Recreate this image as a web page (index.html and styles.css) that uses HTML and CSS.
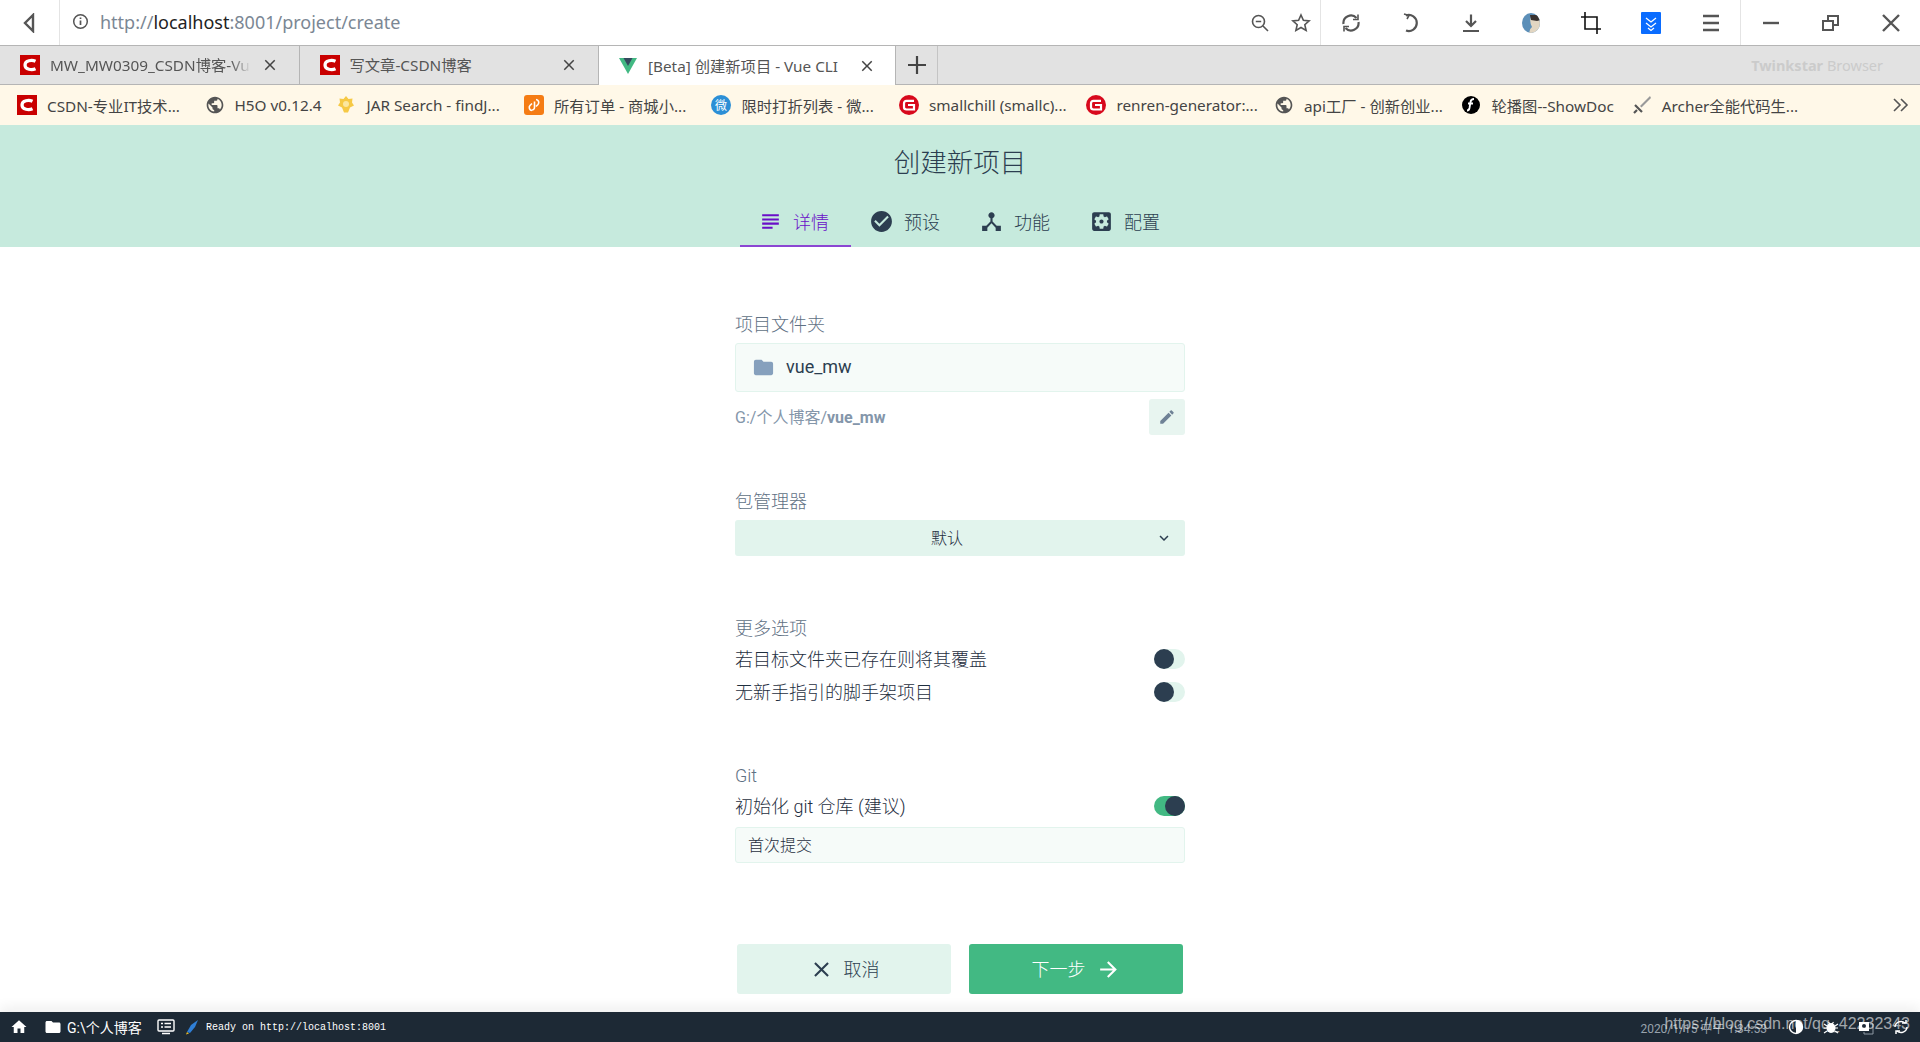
FILE: index.html
```html
<!DOCTYPE html>
<html lang="zh-CN">
<head>
  <meta charset="UTF-8">
  <title>[Beta] 创建新项目 - Vue CLI</title>
  <link rel="stylesheet" href="styles.css">
</head>
<body>
  <svg class="sprite" xmlns="http://www.w3.org/2000/svg">
    <symbol id="i-subject" viewBox="0 0 24 24"><path d="M14 17H4v2h10v-2zm6-8H4v2h16V9zM4 15h16v-2H4v2zM4 5v2h16V5H4z"/></symbol>
    <symbol id="i-check" viewBox="0 0 24 24"><path d="M12 2C6.48 2 2 6.48 2 12s4.48 10 10 10 10-4.48 10-10S17.52 2 12 2zm-2 15l-5-5 1.41-1.41L10 14.17l7.59-7.59L19 8l-9 9z"/></symbol>
    <symbol id="i-hub" viewBox="0 0 24 24"><path d="M17 16l-4-4V8.82C14.16 8.4 15 7.3 15 6c0-1.66-1.34-3-3-3S9 4.34 9 6c0 1.3.84 2.4 2 2.82V12l-4 4H3v5h5v-3.05l4-4.2 4 4.2V21h5v-5h-4z"/></symbol>
    <symbol id="i-settings" viewBox="0 0 24 24"><path d="M12 10c-1.1 0-2 .9-2 2s.9 2 2 2 2-.9 2-2-.9-2-2-2zm7-7H5c-1.11 0-2 .9-2 2v14c0 1.1.89 2 2 2h14c1.11 0 2-.9 2-2V5c0-1.1-.89-2-2-2zm-1.75 9c0 .23-.02.46-.05.68l1.48 1.16c.13.11.17.3.08.45l-1.4 2.42c-.09.15-.27.21-.43.15l-1.74-.7c-.36.28-.76.51-1.18.69l-.26 1.85c-.03.17-.18.3-.35.3h-2.8c-.17 0-.32-.13-.35-.29l-.26-1.85c-.43-.18-.82-.41-1.18-.69l-1.74.7c-.16.06-.34 0-.43-.15l-1.4-2.42c-.09-.15-.05-.34.08-.45l1.48-1.16c-.03-.23-.05-.46-.05-.69 0-.23.02-.46.05-.68l-1.48-1.16c-.13-.11-.17-.3-.08-.45l1.4-2.42c.09-.15.27-.21.43-.15l1.74.7c.36-.28.76-.51 1.18-.69l.26-1.85c.03-.17.18-.3.35-.3h2.8c.17 0 .32.13.35.29l.26 1.85c.43.18.82.41 1.18.69l1.74-.7c.16-.06.34 0 .43.15l1.4 2.42c.09.15.05.34-.08.45l-1.48 1.16c.03.23.05.46.05.69z"/></symbol>
    <symbol id="i-folder" viewBox="0 0 24 24"><path d="M10 4H4c-1.1 0-1.99.9-1.99 2L2 18c0 1.1.9 2 2 2h16c1.1 0 2-.9 2-2V8c0-1.1-.9-2-2-2h-8l-2-2z"/></symbol>
    <symbol id="i-edit" viewBox="0 0 24 24"><path d="M3 17.25V21h3.75L17.81 9.94l-3.75-3.75L3 17.25zM20.71 7.04c.39-.39.39-1.02 0-1.41l-2.34-2.34c-.39-.39-1.02-.39-1.41 0l-1.83 1.83 3.75 3.75 1.83-1.83z"/></symbol>
    <symbol id="i-close" viewBox="0 0 24 24"><path d="M19 6.41L17.59 5 12 10.59 6.41 5 5 6.41 10.59 12 5 17.59 6.41 19 12 13.41 17.59 19 19 17.59 13.41 12z"/></symbol>
    <symbol id="i-arrow" viewBox="0 0 24 24"><path d="M12 4l-1.41 1.41L16.17 11H4v2h12.17l-5.58 5.59L12 20l8-8z"/></symbol>
    <symbol id="i-home" viewBox="0 0 24 24"><path d="M10 20v-6h4v6h5v-8h3L12 3 2 12h3v8z"/></symbol>
    <symbol id="i-more" viewBox="0 0 24 24"><path d="M16.59 8.59L12 13.17 7.41 8.59 6 10l6 6 6-6z"/></symbol>
    <symbol id="i-globe" viewBox="0 0 24 24"><path d="M12 2C6.48 2 2 6.48 2 12s4.48 10 10 10 10-4.48 10-10S17.52 2 12 2zm-1 17.93c-3.95-.49-7-3.85-7-7.93 0-.62.08-1.21.21-1.79L9 15v1c0 1.1.9 2 2 2v1.93zm6.9-2.54c-.26-.81-1-1.39-1.9-1.39h-1v-3c0-.55-.45-1-1-1H8v-2h2c.55 0 1-.45 1-1V7h2c1.1 0 2-.9 2-2v-.41c2.93 1.19 5 4.06 5 7.41 0 2.08-.8 3.97-2.1 5.39z"/></symbol>
    <symbol id="i-csdn" viewBox="0 0 20 20"><rect width="20" height="20" fill="#c90000"/><path d="M15.5 6.2C12 4.6 5 5.2 5 10s7 5.4 10.500 3.800" fill="none" stroke="#fff" stroke-width="3.200"/></symbol>
    <symbol id="i-gitee" viewBox="0 0 20 20"><circle cx="10" cy="10" r="10" fill="#d8091c"/><path d="M15 5.800H7.500Q5 5.800 5 8.300v4Q5 14.500 7.500 14.500H15V10H9" fill="none" stroke="#fff" stroke-width="2.200"/></symbol>
  </svg>

  <div class="toolbar">
    <div class="toolbar-back">
      <svg class="ico" width="18" height="20" viewBox="0 0 18 20"><path d="M12 2L4 10l8 8V2z" fill="none" stroke="#555" stroke-width="2.400"/></svg>
    </div>
    <div class="address">
      <svg width="17" height="17" viewBox="0 0 17 17"><circle cx="8.500" cy="8.500" r="6.800" fill="none" stroke="#555" stroke-width="1.500"/><path d="M8.500 7.500v4.500M8.500 4.500v1.600" stroke="#555" stroke-width="1.700"/></svg>
      <span class="url">http://<b>localhost</b>:8001/project/create</span>
    </div>
    <div class="tool-group tool-group-small">
      <svg width="20" height="20" viewBox="0 0 20 20" fill="none" stroke="#555" stroke-width="1.600"><circle cx="8.500" cy="8.500" r="6"/><path d="M5.800 8.500h5.400M13 13l5 5"/></svg>
      <svg width="20" height="20" viewBox="0 0 20 20" fill="none" stroke="#555" stroke-width="1.600"><path d="M10 2l2.400 5.300 5.700.6-4.300 3.800 1.300 5.700L10 14.500l-5.100 2.900 1.300-5.700L1.900 7.900l5.700-.6z"/></svg>
    </div>
    <div class="tool-group tool-group-main">
      <span class="tool"><svg width="20" height="20" viewBox="0 0 20 20" fill="none" stroke="#555" stroke-width="2.200"><path d="M2.500 11A7.500 7.500 0 0 1 15.500 5M17.500 9A7.500 7.500 0 0 1 4.500 15"/><path d="M17 1.500v5h-5M3 18.500v-5h5" stroke-width="1.600"/></svg></span>
      <span class="tool"><svg width="20" height="20" viewBox="0 0 20 20" fill="none" stroke="#555" stroke-width="2.200"><path d="M5 2.500A8 8 0 1 1 5 17.500"/><path d="M3 1l5 1.500L6 6" stroke-width="1.600"/></svg></span>
      <span class="tool"><svg width="20" height="20" viewBox="0 0 20 20" fill="none" stroke="#555" stroke-width="2.200"><path d="M10 1.500v11M5 8l5 5 5-5M2 18h16"/></svg></span>
      <span class="tool"><svg width="20" height="22" viewBox="0 0 20 22"><clipPath id="face"><ellipse cx="10" cy="11" rx="9" ry="10"/></clipPath><g clip-path="url(#face)"><rect width="20" height="22" fill="#5c8fb8"/><path d="M10 5q7-2 9 4v13H8q0-5 3-7-3-6-1-10z" fill="#e2d6c2"/><path d="M9 3h11v5l-4 1-6-1z" fill="#3a3330"/></g></svg></span>
      <span class="tool"><svg width="22" height="24" viewBox="0 0 22 24" fill="none" stroke="#111" stroke-width="1.600"><path d="M5 1v17h16M1 6h16v17"/></svg></span>
      <span class="tool"><svg width="20" height="22" viewBox="0 0 20 22"><rect width="20" height="22" rx="1" fill="#0a6cff"/><path d="M5 6l5 4 5-4M5 11l5 4 5-4M7 16l3 2.500 3-2.500" fill="none" stroke="#fff" stroke-width="1.300"/></svg></span>
      <span class="tool"><svg width="20" height="20" viewBox="0 0 20 20" fill="none" stroke="#555" stroke-width="2.400"><path d="M2 3h16M2 10h16M2 17h16"/></svg></span>
    </div>
    <div class="win-group">
      <span class="tool"><svg width="20" height="20" viewBox="0 0 20 20" fill="none" stroke="#555" stroke-width="2.400"><path d="M2 10h16"/></svg></span>
      <span class="tool"><svg width="20" height="20" viewBox="0 0 20 20" fill="none" stroke="#555" stroke-width="2"><path d="M2 8h10v9H2zM7 7V3h10v9h-4"/></svg></span>
      <span class="tool"><svg width="20" height="20" viewBox="0 0 20 20" fill="none" stroke="#555" stroke-width="2.400"><path d="M2 2l16 16M18 2L2 18"/></svg></span>
    </div>
  </div>

  <div class="tabstrip">
    <div class="tab">
      <svg class="tab-icon"><use href="#i-csdn"/></svg>
      <span class="tab-title tab-fade">MW_MW0309_CSDN博客-Vu</span>
      <svg class="tab-close"><use href="#i-close"/></svg>
    </div>
    <div class="tab">
      <svg class="tab-icon"><use href="#i-csdn"/></svg>
      <span class="tab-title">写文章-CSDN博客</span>
      <svg class="tab-close"><use href="#i-close"/></svg>
    </div>
    <div class="tab tab-active">
      <svg class="tab-icon" viewBox="0 0 20 20"><path d="M1 2h18L10 18z" fill="#42b983"/><path d="M5.500 2h9L10 10z" fill="#35495e"/></svg>
      <span class="tab-title">[Beta] 创建新项目 - Vue CLI</span>
      <svg class="tab-close"><use href="#i-close"/></svg>
    </div>
    <div class="tab-add">
      <svg width="24" height="24" viewBox="0 0 24 24" fill="none" stroke="#444" stroke-width="2.200"><path d="M12 3v18M3 12h18"/></svg>
    </div>
    <div class="brand"><b>Twinkstar</b> Browser</div>
  </div>

  <div class="bookmarks">
    <div class="mark"><svg class="mark-icon"><use href="#i-csdn"/></svg>CSDN-专业IT技术...</div>
    <div class="mark mark-full"><svg class="mark-icon globe"><use href="#i-globe"/></svg>H5O v0.12.4</div>
    <div class="mark"><svg class="mark-icon" viewBox="0 0 20 20"><path d="M10 1l2.500 3 4-.5-.5 4 2 3-4 2-2 5h-4l-2-5-4-2 2-3-.5-4 4 .5z" fill="#f6c945"/><circle cx="10" cy="9" r="3" fill="#fbe7a0"/></svg>JAR Search - findJ...</div>
    <div class="mark"><svg class="mark-icon" viewBox="0 0 20 20"><rect width="20" height="20" rx="3" fill="#f57c14"/><path d="M12 4.500a3 3 0 0 1 2 5l-2 2M8 15.500a3 3 0 0 1-2-5l2-2M10.500 6.500v6a2.500 2.500 0 0 1-2.500 2.500" fill="none" stroke="#fff" stroke-width="1.600"/></svg>所有订单 - 商城小...</div>
    <div class="mark"><svg class="mark-icon" viewBox="0 0 20 20"><circle cx="10" cy="10" r="10" fill="#2c8fd6"/><text x="10" y="14.500" class="mark-glyph">微</text></svg>限时打折列表 - 微...</div>
    <div class="mark"><svg class="mark-icon"><use href="#i-gitee"/></svg>smallchill (smallc)...</div>
    <div class="mark"><svg class="mark-icon"><use href="#i-gitee"/></svg>renren-generator:...</div>
    <div class="mark"><svg class="mark-icon globe"><use href="#i-globe"/></svg>api工厂 - 创新创业...</div>
    <div class="mark mark-full mark-wide"><svg class="mark-icon" viewBox="0 0 20 20"><circle cx="10" cy="10" r="9" fill="#000"/><path d="M13 4q-3 0-3.500 3L8.500 13q-.5 2.500-2.500 2.500M7 8.500h5" fill="none" stroke="#fff" stroke-width="1.800"/></svg>轮播图--ShowDoc</div>
    <div class="mark"><svg class="mark-icon" viewBox="0 0 20 20"><path d="M18 1L8 11l1.500 1.500L19 3z" fill="#999"/><path d="M3 10l7 7M5 15l-3 3" stroke="#555" stroke-width="2.200"/></svg>Archer全能代码生...</div>
    <svg class="mark-more" width="18" height="18" viewBox="0 0 18 18" fill="none" stroke="#555" stroke-width="1.600"><path d="M2 3l6 6-6 6M9 3l6 6-6 6"/></svg>
  </div>

  <div class="page-head">
    <h1>创建新项目</h1>
    <div class="steps">
      <div class="step step-active"><svg class="step-icon"><use href="#i-subject"/></svg>详情</div>
      <div class="step"><svg class="step-icon"><use href="#i-check"/></svg>预设</div>
      <div class="step"><svg class="step-icon"><use href="#i-hub"/></svg>功能</div>
      <div class="step"><svg class="step-icon"><use href="#i-settings"/></svg>配置</div>
    </div>
  </div>

  <div class="main">
    <div class="form">
      <div class="section">
        <div class="label">项目文件夹</div>
        <div class="input input-big">
          <svg class="folder-icon"><use href="#i-folder"/></svg>
          <span>vue_mw</span>
        </div>
        <div class="path-row">
          <div class="path">G:/个人博客/<b>vue_mw</b></div>
          <div class="edit-btn"><svg class="edit-icon"><use href="#i-edit"/></svg></div>
        </div>
      </div>

      <div class="section section-select">
        <div class="label">包管理器</div>
        <div class="select">
          <span>默认</span>
          <svg class="select-icon"><use href="#i-more"/></svg>
        </div>
      </div>

      <div class="section">
        <div class="label label-tight">更多选项</div>
        <div class="switch-row"><span>若目标文件夹已存在则将其覆盖</span><span class="switch"></span></div>
        <div class="switch-row"><span>无新手指引的脚手架项目</span><span class="switch"></span></div>
      </div>

      <div class="section">
        <div class="label label-tight">Git</div>
        <div class="switch-row"><span>初始化 git 仓库 (建议)</span><span class="switch switch-on"></span></div>
        <div class="input input-small">首次提交</div>
      </div>
    </div>

    <div class="actions">
      <div class="btn btn-cancel"><svg class="btn-icon"><use href="#i-close"/></svg>取消</div>
      <div class="btn btn-next">下一步<svg class="btn-icon"><use href="#i-arrow"/></svg></div>
    </div>
  </div>

  <div class="statusbar">
    <svg class="status-home"><use href="#i-home"/></svg>
    <svg class="status-folder"><use href="#i-folder"/></svg>
    <span class="status-cwd">G:\个人博客</span>
    <svg class="status-log" width="18" height="16" viewBox="0 0 18 16" fill="none" stroke="#fff" stroke-width="1.400"><rect x="1" y="1" width="16" height="11" rx="1"/><path d="M4 4.500h2M7.500 4.500h6.500M4 8h2M7.500 8h6.500M5 14.500h8"/></svg>
    <svg class="status-rocket" width="14" height="16" viewBox="0 0 14 16"><path d="M13 1L6 6 2 13l3 1 5-6z" fill="#2f7fd6"/><path d="M2 13l-1 2.500 3-1z" fill="#e8b923"/></svg>
    <span class="status-msg">Ready on http://localhost:8001</span>
    <div class="status-right">
      <span class="status-date">2020/1/15 中午 1:34:53</span>
      <svg width="16" height="16" viewBox="0 0 16 16"><circle cx="8" cy="8" r="6.500" fill="none" stroke="#fff" stroke-width="1.400"/><path d="M8 1.500a6.500 6.500 0 0 1 0 13z" fill="#fff"/></svg>
      <svg width="16" height="16" viewBox="0 0 16 16"><ellipse cx="8" cy="9" rx="4.500" ry="5" fill="#fff"/><path d="M1 5l3 2M15 5l-3 2M1 9h3M15 9h-3M1 14l3-2M15 14l-3-2M5.500 3l1.500 2M10.500 3L9 5" stroke="#fff" stroke-width="1.200"/></svg>
      <svg width="16" height="16" viewBox="0 0 16 16"><path d="M1 3h10v9H1z" fill="#fff"/><circle cx="6" cy="7" r="2" fill="#1d2935"/><path d="M12 5h3v10H6v-2" fill="none" stroke="#8d98a3"/></svg>
      <svg width="16" height="16" viewBox="0 0 16 16" fill="none" stroke="#fff" stroke-width="1.500"><path d="M2 8a6 6 0 0 1 10-4M14 8a6 6 0 0 1-10 4"/><path d="M9 4h4V1M7 12H3v3"/></svg>
    </div>
    <span class="watermark">https://blog.csdn.net/qq_42232343</span>
  </div>
</body>
</html>
```

FILE: styles.css
```css
* { box-sizing: border-box; }
html, body { height: 100%; }
body {
  margin: 0;
  height: 1042px;
  display: flex;
  flex-direction: column;
  overflow: hidden;
  background: #fff;
  color: #2c3e50;
  font-family: Roboto, "Noto Sans CJK SC", sans-serif;
  font-size: 18px;
}
.sprite { display: none; }

/* browser chrome */
.toolbar {
  height: 45px;
  display: flex;
  align-items: center;
  background: #fff;
  flex: none;
}
.toolbar-back {
  width: 60px;
  height: 100%;
  display: flex;
  align-items: center;
  padding-left: 21px;
  border-right: 1px solid #e4e4e4;
}
.address {
  flex: 1;
  display: flex;
  align-items: center;
  gap: 11px;
  padding: 0 0 2px 12px;
}
.url {
  font-family: "Noto Sans", "Noto Sans CJK SC", sans-serif;
  font-size: 18px;
  color: #7b8794;
}
.url b { font-weight: 400; color: #222; }
.tool-group-small {
  width: 70px;
  display: flex;
  gap: 21px;
}
.tool-group-main, .win-group {
  height: 100%;
  display: flex;
  align-items: center;
  border-left: 1px solid #e4e4e4;
}
.tool-group-main { width: 420px; }
.win-group { width: 180px; }
.tool { width: 60px; flex: none; display: flex; justify-content: center; }

.tabstrip {
  height: 40px;
  flex: none;
  display: flex;
  background: #e2e2e2;
  border-top: 1px solid #b5b5b5;
  border-bottom: 1px solid #b5b5b5;
  font-family: "Noto Sans", "Noto Sans CJK SC", sans-serif;
  font-size: 15.300px;
  color: #555;
}
.tab {
  width: 299.500px;
  display: flex;
  align-items: center;
  padding: 0 20px;
  border-right: 1px solid #b5b5b5;
}
.tab-active {
  width: 297px;
  margin-bottom: -1px;
  padding: 0 19px;
  background: #fff;
}
.tab-icon { width: 20px; height: 20px; flex: none; margin-right: 10px; }
.tab-title {
  flex: 1;
  padding-bottom: 2px;
  white-space: nowrap;
}
.tab-fade {
  -webkit-mask-image: linear-gradient(to left, transparent 0, #000 20px);
}
.tab-close { width: 18px; height: 18px; flex: none; margin-left: 10px; fill: #444; }
.tab-add {
  width: 42px;
  display: flex;
  align-items: center;
  justify-content: center;
  border-right: 1px solid #c4c4c4;
}
.brand {
  margin-left: auto;
  margin-right: 37px;
  align-self: center;
  color: #cbcbcb;
  font-size: 14.500px;
}

.bookmarks {
  height: 40px;
  flex: none;
  display: flex;
  align-items: center;
  padding-left: 17px;
  background: #fff8e8;
  font-family: "Noto Sans", "Noto Sans CJK SC", sans-serif;
  font-size: 15.300px;
  color: #444;
  white-space: nowrap;
}
.mark { width: 187.500px; flex: none; display: flex; align-items: center; }
.mark-full { width: auto; margin-right: 15px; }
.mark-wide { margin-right: 18px; }
.mark-icon { width: 20px; height: 20px; flex: none; margin-right: 10px; }
.globe { fill: #555; }
.mark-glyph { font-size: 12px; fill: #fff; text-anchor: middle; }
.mark-more { margin-left: auto; margin-right: 10px; }

/* vue ui header */
.page-head {
  height: 122px;
  flex: none;
  background: #c6eadd;
  text-align: center;
}
.page-head h1 {
  margin: 0;
  padding-top: 20px;
  height: 79px;
  font-size: 26.500px;
  font-weight: 300;
  line-height: 35px;
}
.steps {
  display: flex;
  justify-content: center;
  padding-left: 1px;
}
.step {
  width: 110px;
  height: 43px;
  display: flex;
  align-items: center;
  padding: 0 0 7px 18px;
  font-size: 18px;
  font-weight: 300;
  border-bottom: 2px solid transparent;
}
.step-icon { width: 25px; height: 25px; margin-right: 10px; fill: #2c3e50; }
.step-active { width: 111px; color: #6a0fc8; border-bottom-color: #8b46d2; }
.step-active .step-icon { fill: #6a0fc8; }

/* form */
.main {
  flex: 1;
  display: flex;
  flex-direction: column;
  align-items: center;
  padding-top: 65px;
  font-weight: 300;
}
.form { width: 450px; flex: 1; }
.section { margin-bottom: 54px; }
.section-select { margin-bottom: 59px; }
.label {
  line-height: 26px;
  margin-bottom: 5px;
  color: #5f7184;
}
.label-tight { line-height: 28px; margin-bottom: 0; }
.input {
  display: flex;
  align-items: center;
  background: #f6fbf9;
  border: 1px solid #e2f4ed;
  border-radius: 3px;
}
.input-big { height: 49px; padding: 0 0 2px 16px; font-weight: 400; }
.input-small {
  height: 36px;
  margin-top: 5px;
  padding: 0 0 2px 12px;
  font-size: 16px;
  color: #1f2f3f;
}
.folder-icon { width: 23px; height: 23px; margin: 2px 11px 0 0; fill: #86a0bd; }
.path-row {
  display: flex;
  align-items: center;
  justify-content: space-between;
  margin-top: 7px;
}
.path { margin-bottom: 2px; font-size: 16px; color: #8496aa; font-weight: 400; }
.edit-btn {
  width: 36px;
  height: 36px;
  display: flex;
  align-items: center;
  justify-content: center;
  background: #e8f5f0;
  border-radius: 3px;
}
.edit-icon { width: 18px; height: 18px; fill: #6f8296; }
.select {
  height: 36px;
  display: flex;
  align-items: center;
  justify-content: space-between;
  padding: 0 12px 0 196px;
  background: #e2f4ed;
  border-radius: 3px;
  font-size: 16px;
  color: #1f2f3f;
}
.select span { padding-bottom: 2px; }
.select-icon { width: 18px; height: 18px; fill: #2c3e50; }
.switch-row {
  height: 32px;
  display: flex;
  align-items: center;
  justify-content: space-between;
  color: #1f2f3f;
}
.switch-row + .switch-row { margin-top: 1px; }
.switch-row span:first-child { padding-bottom: 2px; }
.switch {
  width: 31px;
  height: 20px;
  display: flex;
  background: #e2f4ed;
  border-radius: 10px;
}
.switch::before {
  content: "";
  width: 20px;
  height: 20px;
  background: #2c3e50;
  border-radius: 50%;
}
.switch-on { justify-content: flex-end; background: #42b983; }
.actions {
  display: flex;
  gap: 18px;
  padding-bottom: 18px;
}
.btn {
  width: 214px;
  height: 50px;
  display: flex;
  align-items: center;
  justify-content: center;
  padding-bottom: 2px;
  border-radius: 3px;
}
.btn-icon { width: 25px; height: 25px; margin-top: 2px; }
.btn-cancel { background: #e2f4ed; }
.btn-cancel .btn-icon { margin-right: 10px; fill: #2c3e50; }
.btn-next { background: #42b983; color: #fff; }
.btn-next .btn-icon { margin-left: 10px; fill: #fff; }

/* status bar */
.statusbar {
  position: relative;
  height: 30px;
  flex: none;
  display: flex;
  align-items: center;
  padding-left: 10px;
  background: #1d2935;
  color: #fff;
  box-shadow: 0 -6px 12px rgba(0, 0, 0, .06);
  font-size: 14px;
}
.status-home { width: 18px; height: 18px; fill: #fff; margin-right: 16px; }
.status-folder { width: 18px; height: 18px; fill: #fff; margin-right: 5px; }
.status-cwd { width: 90px; }
.status-log { margin-right: 10px; }
.status-rocket { margin-right: 7px; }
.status-msg {
  font-family: "Liberation Mono", monospace;
  font-size: 10px;
}
.status-right {
  margin-left: auto;
  display: flex;
  align-items: center;
  gap: 19px;
  padding-right: 11px;
  color: #98a2ac;
  font-size: 12px;
}
.status-date { margin-right: 2px; }
.watermark {
  position: absolute;
  right: 10px;
  top: 1px;
  color: rgba(255, 255, 255, .6);
  font-family: "Liberation Sans", sans-serif;
  font-size: 16px;
  line-height: 22px;
}
```
